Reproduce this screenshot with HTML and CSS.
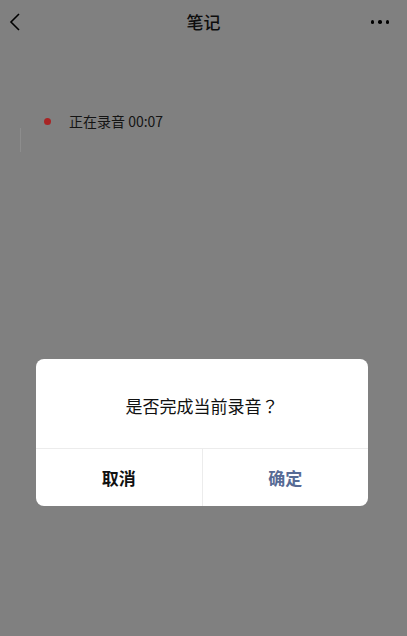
FILE: index.html
```html
<!DOCTYPE html>
<html lang="zh">
<head>
<meta charset="utf-8">
<link rel="stylesheet" href="styles.css">
</head>
<body>
<div class="page">
  <header class="nav">
    <svg class="back" width="12" height="20" viewBox="0 0 12 20"><path d="M10 2 L2 10 L10 18" fill="none" stroke="#000" stroke-width="1.6" stroke-linejoin="miter"/></svg>
    <div class="title">笔记</div>
    <div class="more"><span></span><span></span><span></span></div>
  </header>
  <div class="content">
    <div class="rec"><span class="dot"></span><span class="rec-text">正在录音 00:07</span></div>
    <div class="cursor"></div>
  </div>
</div>
<div class="mask">
  <div class="dialog">
    <div class="msg">是否完成当前录音<span class="q">？</span></div>
    <div class="btns">
      <div class="btn cancel">取消</div>
      <div class="btn ok">确定</div>
    </div>
  </div>
</div>
</body>
</html>
```
FILE: styles.css
```css
html, body {
  margin: 0;
  padding: 0;
  background: #808080;
  font-family: "Noto Sans CJK SC", "Noto Sans", sans-serif;
  width: 407px;
  height: 636px;
  overflow: hidden;
}
.page {
  width: 407px;
  height: 636px;
}
.nav {
  height: 44px;
  display: flex;
  align-items: center;
  justify-content: space-between;
  padding: 0 18px 0 9px;
  position: relative;
}
.back { display: block; }
.title {
  position: absolute;
  left: 0;
  right: 0;
  top: 0;
  text-align: center;
  font-size: 17px;
  font-weight: 500;
  color: #0d0d0d;
  line-height: 44px;
}
.more {
  display: flex;
  gap: 4px;
  align-items: center;
}
.more span {
  width: 3.5px;
  height: 3.5px;
  border-radius: 50%;
  background: #000;
}
.content {
  padding: 67px 0 0 44px;
  position: relative;
}
.rec {
  display: flex;
  align-items: center;
  height: 20px;
}
.dot {
  width: 7px;
  height: 7px;
  border-radius: 50%;
  background: #a82424;
  margin-right: 18px;
}
.rec-text {
  font-size: 14px;
  color: #141414;
  line-height: 20px;
}
.cursor {
  position: absolute;
  left: 20px;
  top: 84px;
  width: 1px;
  height: 24px;
  background: rgba(255,255,255,0.1);
}
.mask {
  position: absolute;
  left: 0;
  top: 0;
  width: 407px;
  height: 636px;
}
.dialog {
  position: absolute;
  left: 36px;
  top: 359px;
  width: 332px;
  background: #fff;
  border-radius: 8px;
  overflow: hidden;
}
.msg {
  height: 90px;
  box-sizing: border-box;
  padding-top: 3px;
  display: flex;
  align-items: center;
  justify-content: center;
  font-size: 17px;
  color: #111;
  border-bottom: 1px solid #ececec;
}
.q {
  font-family: "Noto Sans CJK TC", "Noto Sans CJK SC", sans-serif;
}
.btns {
  display: flex;
  height: 57px;
}
.btn {
  flex: 1;
  display: flex;
  align-items: center;
  justify-content: center;
  font-size: 17px;
  font-weight: 700;
}
.cancel {
  color: #111;
  border-right: 1px solid #ececec;
}
.ok {
  color: #576b95;
}
```
